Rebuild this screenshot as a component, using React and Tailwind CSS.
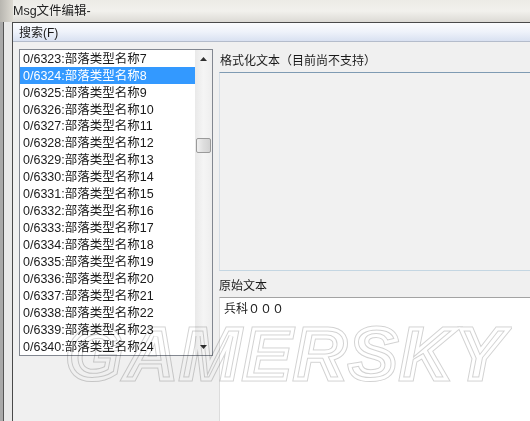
import React from "react";

const items = [];
for (let i = 0; i < 18; i++) {
  items.push({ id: 6323 + i, n: 7 + i });
}

const FONT = { fontFamily: '"Liberation Sans", "Noto Sans CJK SC", sans-serif' };

export default function App() {
  return (
    <div
      className="relative w-[530px] h-[421px] overflow-hidden flex flex-col bg-[#f0f0f0] text-[#1a1a1a]"
      style={FONT}
    >
      {/* title bar */}
      <div className="h-[22px] flex bg-gradient-to-b from-[#ecebe6] via-[#f2f1ed] to-[#dcdad5]">
        <div className="w-[13px] h-full bg-gradient-to-r from-[#b8b6b0] to-[#dedbd3]" />
        <div className="flex items-center text-[12.5px] leading-none pt-[1px] text-[#222]">Msg文件编辑-</div>
      </div>

      <div className="flex flex-1 min-h-0">
        {/* left desktop strip */}
        <div className="w-[12px] flex">
          <div className="w-[3px] bg-[#a9a9a9]" />
          <div className="w-[1px] bg-[#555]" />
          <div className="flex-1 bg-[#e9e9e9]" />
        </div>

        {/* window */}
        <div className="flex-1 flex flex-col border-l border-t border-[#4a4a4a] min-w-0">
          {/* menu bar */}
          <div className="h-[19px] flex items-center pl-[6px] text-[12px] leading-none bg-gradient-to-b from-[#fbfcfe] via-[#eef2fa] to-[#d9e1f1] border-b border-[#b4bccb]">
            <span className="pt-[1px]">搜索(F)</span>
          </div>

          {/* body */}
          <div className="flex flex-1 min-h-0 pt-[7px] pl-[6px] bg-[#f0f0f0]">
            {/* list box */}
            <div className="w-[194px] h-[307px] border border-[#828790] bg-white flex">
              <div className="flex-1 flex flex-col">
                {items.map((it) => {
                  const sel = it.id === 6324;
                  return (
                    <div
                      key={it.id}
                      className={
                        sel
                          ? "h-[17px] flex items-center pl-[3px] text-[12.5px] leading-none bg-[#3399ff] text-white"
                          : "h-[17px] flex items-center pl-[3px] text-[12.5px] leading-none text-[#1a1a1a]"
                      }
                    >
                      <span className="pt-[1px] whitespace-nowrap">0/{it.id}:部落类型名称{it.n}</span>
                    </div>
                  );
                })}
              </div>
              {/* scrollbar */}
              <div className="w-[17px] flex flex-col bg-gradient-to-r from-[#e9e9e9] via-[#f5f5f5] to-[#eeeeee]">
                <div className="h-[17px] flex items-center justify-center">
                  <svg width="7" height="4" viewBox="0 0 7 4">
                    <path d="M0 4 L3.5 0 L7 4 Z" fill="#303030" />
                  </svg>
                </div>
                <div className="h-[71px]" />
                <div className="h-[15px] mx-[1px] rounded-[2px] border border-[#9a9a9a] bg-gradient-to-r from-[#f0f0f0] via-[#dedede] to-[#d2d2d2]" />
                <div className="flex-1" />
                <div className="h-[17px] flex items-center justify-center">
                  <svg width="7" height="4" viewBox="0 0 7 4">
                    <path d="M0 0 L7 0 L3.5 4 Z" fill="#303030" />
                  </svg>
                </div>
              </div>
            </div>

            {/* right panel */}
            <div className="flex-1 flex flex-col ml-[6px] min-w-0">
              <div className="h-[23px] flex items-center text-[12px] leading-none pl-[1px]">
                <span className="pt-[1px] whitespace-nowrap">格式化文本（目前尚不支持）</span>
              </div>
              <div className="h-[199px] border-t border-[#7f9bb3] border-l border-l-[#d6dee6] border-b border-b-[#c4d6e2] bg-[#f1f1f1]" />
              <div className="h-[26px] flex items-center text-[12px] leading-none">
                <span className="pt-[4px]">原始文本</span>
              </div>
              <div className="flex-1 bg-white border-t border-[#a3a3a3] border-l border-l-[#dcdcdc] pl-[4px] pt-[5px] text-[12px] leading-none">
                兵科０００
              </div>
            </div>
          </div>
        </div>
      </div>

      {/* watermark */}
      <div
        className="absolute left-[66px] top-[318px] mix-blend-multiply pointer-events-none"
        style={{ fontFamily: '"Liberation Sans", sans-serif' }}
      >
        <div className="relative text-[72px] leading-none font-bold italic tracking-[3px] text-transparent [-webkit-text-stroke:5px_#d2d2d2]">
          GAMERSKY
          <div className="absolute left-0 top-0 text-transparent [-webkit-text-stroke:3px_#ffffff]">
            GAMERSKY
          </div>
        </div>
      </div>
    </div>
  );
}
